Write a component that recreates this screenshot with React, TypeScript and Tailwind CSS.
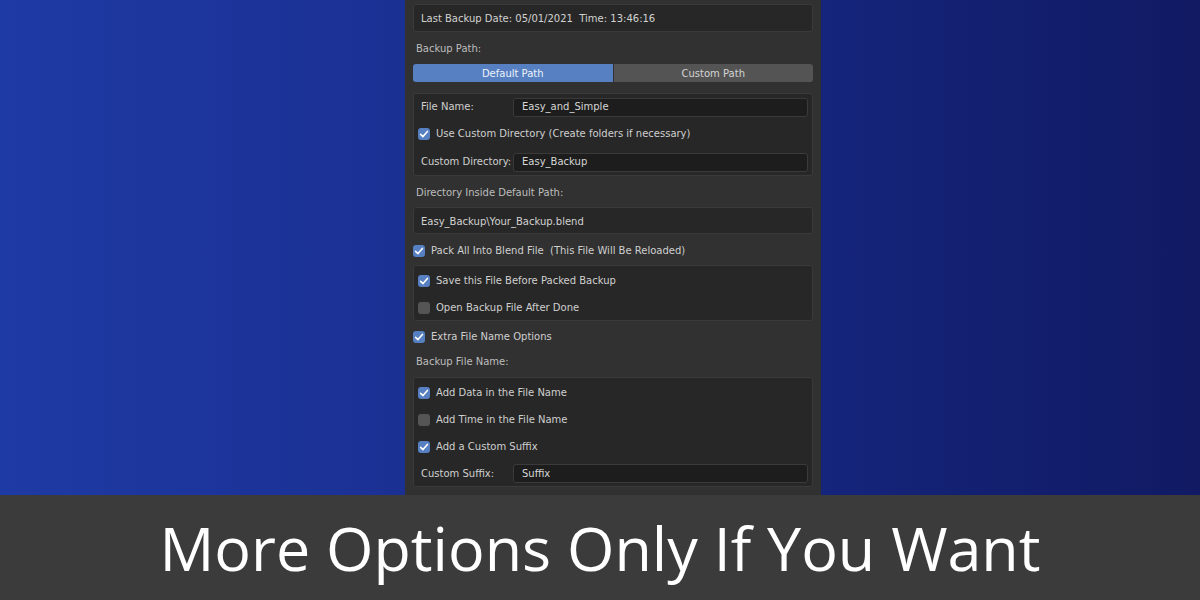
import React from 'react';

const uiFont = "font-['DejaVu_Sans',sans-serif]";

function CheckBox({ checked }: { checked: boolean }) {
  if (!checked) {
    return <span className="block w-[12px] h-[12px] rounded-[3px] bg-[#555555] shrink-0" />;
  }
  return (
    <span className="flex items-center justify-center w-[12px] h-[12px] rounded-[3px] bg-[#5680c2] shrink-0">
      <svg width="12" height="12" viewBox="0 0 12 12" fill="none">
        <path d="M2.6 6.3 L5 8.6 L9.4 3.4" stroke="#ffffff" strokeWidth="1.6" strokeLinecap="round" strokeLinejoin="round" />
      </svg>
    </span>
  );
}

function CheckRow({ checked, label, inBox, h = 'h-[27px]' }: { checked: boolean; label: string; inBox?: boolean; h?: string }) {
  return (
    <div className={`flex items-center gap-[6px] pt-[2px] ${h} ${inBox ? 'pl-[4px]' : 'pl-0'}`}>
      <CheckBox checked={checked} />
      <span className="text-[#cfcfcf] whitespace-pre">{label}</span>
    </div>
  );
}

function FieldRow({ label, value, h = 'h-[27px]' }: { label: string; value: string; h?: string }) {
  return (
    <div className={`flex items-center pt-[2px] ${h} pl-[7px] pr-[4px]`}>
      <span className="w-[92px] shrink-0 text-[#cfcfcf]">{label}</span>
      <div className="flex-1 h-[19px] flex items-center pl-[8px] rounded-[3px] bg-[#1d1d1d] border border-[#3a3a3a] text-[#d6d6d6]">
        {value}
      </div>
    </div>
  );
}

function Box({ children, className = '' }: { children: React.ReactNode; className?: string }) {
  return (
    <div className={`rounded-[3px] bg-[#272727] border border-[#3a3a3a] ${className}`}>{children}</div>
  );
}

function Label({ text, h }: { text: string; h: string }) {
  return <div className={`flex items-center pl-[3px] pt-[2px] ${h} text-[#bdbdbd]`}>{text}</div>;
}

export default function App() {
  return (
    <div className="w-[1200px] h-[600px] flex flex-col overflow-hidden">
      <div className="h-[495px] flex bg-[linear-gradient(90deg,#1e3aa4_0%,#1b3195_30%,#15267e_65%,#111a63_100%)]">
        <div className="w-[405px]" />
        <div className={`w-[416px] bg-[#313131] px-[8px] pt-[4px] text-[10px] leading-none ${uiFont}`}>
          <Box className="h-[28px] flex items-center pt-[2px] pl-[7px] text-[#d2d2d2] whitespace-pre">
            {'Last Backup Date: 05/01/2021  Time: 13:46:16'}
          </Box>

          <Label text="Backup Path:" h="h-[32px]" />

          <div className="flex gap-[1px] h-[18px]">
            <div className="flex-1 flex items-center justify-center pt-[1px] rounded-l-[3px] bg-[#5680c2] text-[#eef2fa]">
              Default Path
            </div>
            <div className="flex-1 flex items-center justify-center pt-[1px] rounded-r-[3px] bg-[#545454] text-[#d4d4d4]">
              Custom Path
            </div>
          </div>

          <Box className="mt-[11px]">
            <FieldRow label="File Name:" value="Easy_and_Simple" h="h-[24px]" />
            <CheckRow checked label="Use Custom Directory (Create folders if necessary)" inBox h="h-[29px]" />
            <FieldRow label="Custom Directory:" value="Easy_Backup" h="h-[28px]" />
          </Box>

          <Label text="Directory Inside Default Path:" h="h-[31px]" />

          <Box className="h-[27px] flex items-center pt-[2px] pl-[7px] text-[#d2d2d2]">
            {'Easy_Backup\\Your_Backup.blend'}
          </Box>

          <CheckRow checked label="Pack All Into Blend File  (This File Will Be Reloaded)" h="h-[31px]" />

          <Box>
            <CheckRow checked label="Save this File Before Packed Backup" inBox />
            <CheckRow checked={false} label="Open Backup File After Done" inBox />
          </Box>

          <CheckRow checked label="Extra File Name Options" h="h-[30px]" />
          <Label text="Backup File Name:" h="h-[20px] mb-[6px]" />

          <Box>
            <CheckRow checked label="Add Data in the File Name" inBox />
            <CheckRow checked={false} label="Add Time in the File Name" inBox />
            <CheckRow checked label="Add a Custom Suffix" inBox />
            <FieldRow label="Custom Suffix:" value="Suffix" />
          </Box>
        </div>
        <div className="flex-1" />
      </div>

      <div className="h-[105px] bg-[#3b3b3b] flex items-center justify-center">
        <span className="text-white text-[61px] leading-none font-['Open_Sans',sans-serif]">
          More Options Only If You Want
        </span>
      </div>
    </div>
  );
}
